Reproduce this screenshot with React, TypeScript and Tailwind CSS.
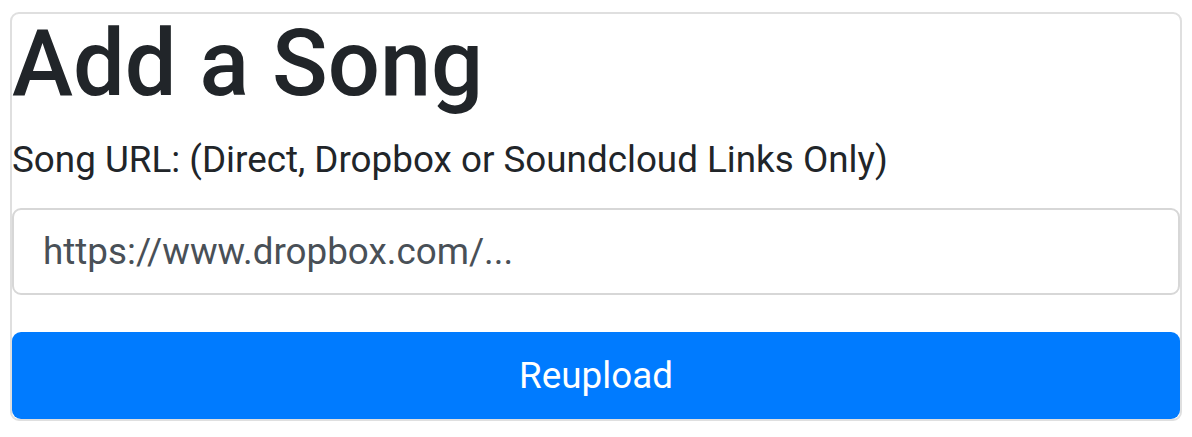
import React from "react";

export default function App() {
  return (
    <div className="w-[1192px] h-[437px] bg-white pt-[12px] pl-[10px]" style={{ fontFamily: "Roboto, 'Liberation Sans', sans-serif" }}>
      <div className="w-[1172px] border-2 border-[#dfdfdf] rounded-[9px] flex flex-col">
        <h1 className="text-[92px] leading-[100px] font-medium text-[#212529] h-[100px]">Add a Song</h1>
        <label className="mt-[18px] text-[36.8px] leading-[55px] text-[#212529] h-[55px] block">Song URL: (Direct, Dropbox or Soundcloud Links Only)</label>
        <div className="mt-[21px] h-[87px] border-2 border-[#d7d7d7] rounded-[9px] flex items-center pl-[29px] text-[36.8px] text-[#495057]">
          https://www.dropbox.com/...
        </div>
        <div className="mt-[37px] h-[87px] bg-[#007bff] rounded-[9px] flex items-center justify-center text-[36.8px] text-white">
          Reupload
        </div>
      </div>
    </div>
  );
}
